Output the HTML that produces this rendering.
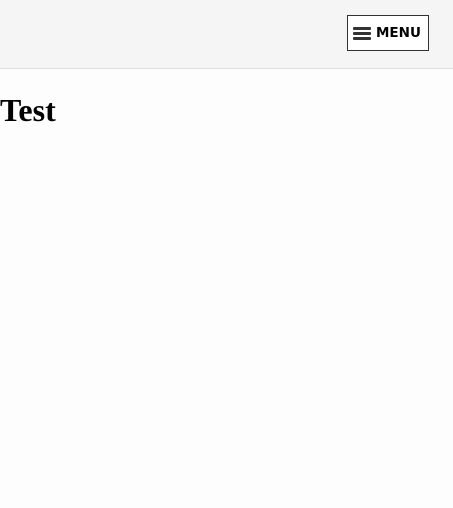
<!DOCTYPE html>
<html><head><style>
html,body{margin:0;padding:0;background:#fdfdfd;width:453px;height:508px;overflow:hidden}
.hdr{position:absolute;left:0;top:0;width:453px;height:68px;background:#f5f5f5;border-bottom:1px solid #dedede}
.btn{position:absolute;left:347px;top:15px;width:80px;height:34px;border:1px solid #333;background:#fff;box-sizing:content-box}
.ham{position:absolute;left:5px;top:11px;width:18px}
.ham i{display:block;height:3px;background:#333;margin-bottom:2px;border-radius:1px}
.lbl{position:absolute;left:28px;top:9px;font:bold 13.5px "DejaVu Sans",sans-serif;color:#000}
h1{position:absolute;left:0;top:92px;margin:0;font:bold 32px "Liberation Serif",serif;color:#000}
</style></head><body>
<div class="hdr"><div class="btn"><div class="ham"><i></i><i></i><i></i></div><span class="lbl">MENU</span></div></div>
<h1>Test</h1>
</body></html>
